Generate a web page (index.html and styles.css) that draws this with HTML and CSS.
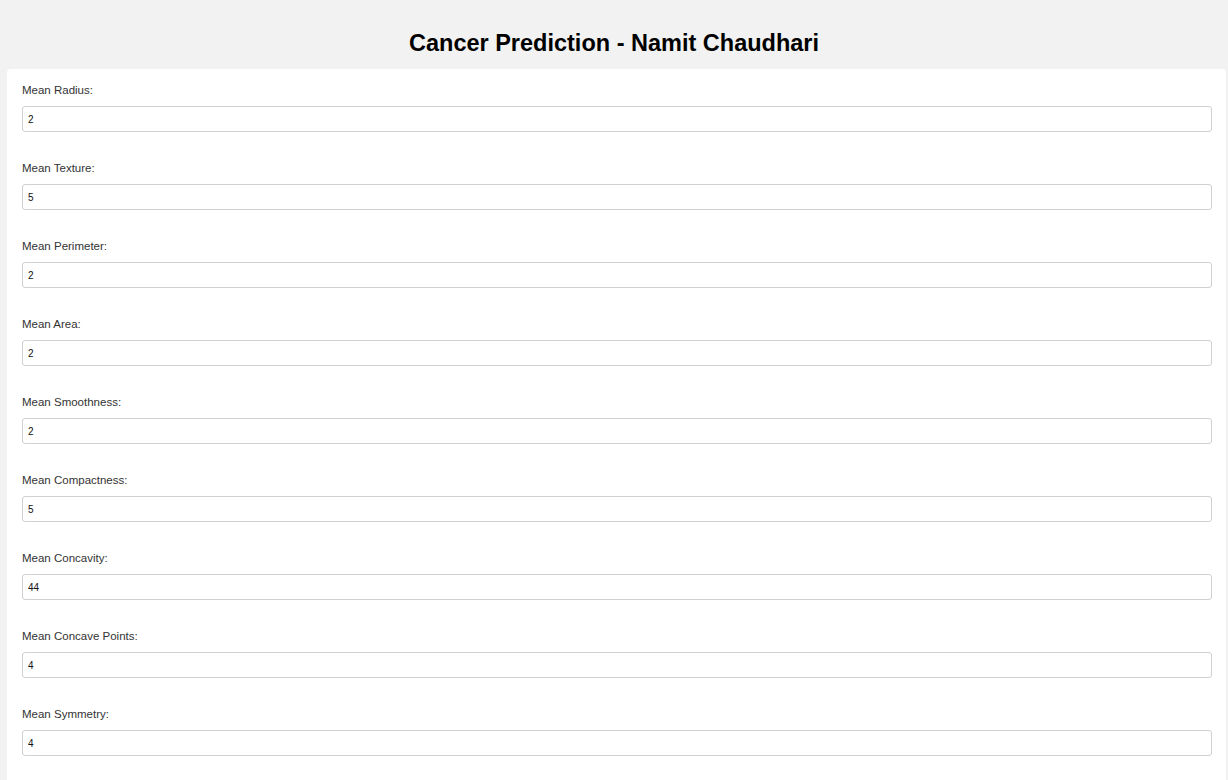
FILE: index.html
```html
<!DOCTYPE html>
<html>
<head>
<meta charset="utf-8">
<title>Cancer Prediction</title>
<link rel="stylesheet" href="styles.css">
</head>
<body>
<header class="header"><h1 class="title">Cancer Prediction - Namit Chaudhari</h1></header>
<main class="container">
  <form class="form">
    <div class="field"><label class="label">Mean Radius:</label><input class="input" type="text" value="2"></div>
    <div class="field"><label class="label">Mean Texture:</label><input class="input" type="text" value="5"></div>
    <div class="field"><label class="label">Mean Perimeter:</label><input class="input" type="text" value="2"></div>
    <div class="field"><label class="label">Mean Area:</label><input class="input" type="text" value="2"></div>
    <div class="field"><label class="label">Mean Smoothness:</label><input class="input" type="text" value="2"></div>
    <div class="field"><label class="label">Mean Compactness:</label><input class="input" type="text" value="5"></div>
    <div class="field"><label class="label">Mean Concavity:</label><input class="input" type="text" value="44"></div>
    <div class="field"><label class="label">Mean Concave Points:</label><input class="input" type="text" value="4"></div>
    <div class="field"><label class="label">Mean Symmetry:</label><input class="input" type="text" value="4"></div>
  </form>
</main>
</body>
</html>
```
FILE: styles.css
```css
html, body {
  margin: 0;
  padding: 0;
}
body {
  background: #f2f2f2;
  font-family: "Liberation Sans", Arial, sans-serif;
  color: #333;
}
.header {
  height: 69px;
  display: flex;
  align-items: center;
  justify-content: center;
}
.title {
  margin: 18px 0 0 0;
  font-size: 23.5px;
  font-weight: bold;
  color: #000;
}
.container {
  margin: 0 2px 0 7px;
  background: #fff;
  border-radius: 4px;
  padding: 14px 14px 30px 15px;
}
.form {
  display: flex;
  flex-direction: column;
}
.field {
  display: flex;
  flex-direction: column;
  margin-bottom: 29px;
}
.label {
  font-size: 11.5px;
  line-height: 14px;
  height: 14px;
  color: #333;
  margin-bottom: 9px;
}
.input {
  box-sizing: border-box;
  height: 26px;
  border: 1px solid #d0d0d0;
  border-radius: 3px;
  padding: 0 5px;
  font-family: "Liberation Sans", Arial, sans-serif;
  font-size: 10px;
  color: #111;
  background: #fff;
  outline: none;
}
```
